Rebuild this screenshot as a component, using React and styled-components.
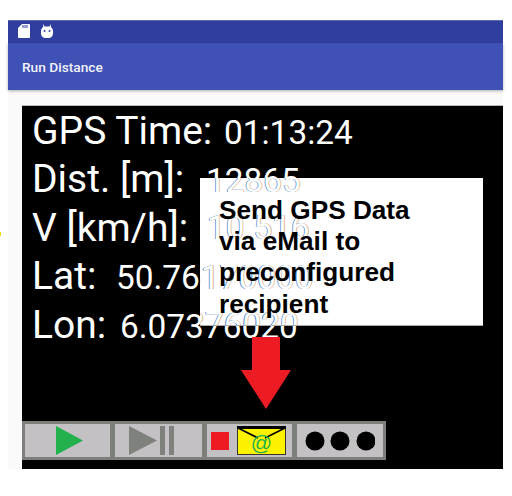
import React from "react";
import styled, { createGlobalStyle } from "styled-components";

const Global = createGlobalStyle`
  html, body { margin: 0; padding: 0; background: #fff; }
  body { font-family: Roboto, "Liberation Sans", sans-serif; }
`;

const Page = styled.div`
  position: relative;
  width: 512px;
  height: 496px;
  padding: 20px 9px 0 8px;
  box-sizing: border-box;
  overflow: hidden;
`;

const Speck = styled.i`
  position: absolute;
  left: 0;
  top: 232px;
  width: 1px;
  height: 4px;
  background: #f5d800;
`;

const Phone = styled.div`
  height: 449px;
  background: #fafafa;
  display: flex;
  flex-direction: column;
`;

const StatusBar = styled.div`
  height: 23px;
  flex: none;
  background: #303f9f;
  border-top: 1px solid #5c68b0;
  display: flex;
  align-items: center;
  gap: 11px;
  padding: 0 0 2px 10px;
  box-sizing: border-box;
`;

const AppBar = styled.div`
  height: 47px;
  flex: none;
  background: #3f51b5;
  color: #f2f3fa;
  font-size: 13.7px;
  font-weight: 500;
  display: flex;
  align-items: center;
  padding-left: 14px;
  box-shadow: 0 1px 3px rgba(0, 0, 0, 0.3);
`;

const Body = styled.div`
  flex: 1;
  padding: 15px 0 0 14px;
  display: flex;
  min-height: 0;
`;

const Screen = styled.div`
  position: relative;
  flex: 1;
  background: #000;
  border-top: 1px solid #bbb;
  padding: 2px 0 9px 10px;
  display: flex;
  flex-direction: column;
  color: #fff;
`;

const Rows = styled.div`
  flex: 1;
  display: flex;
  flex-direction: column;
`;

const Row = styled.div`
  height: 48.4px;
  display: flex;
  align-items: baseline;
  white-space: nowrap;
`;

const Label = styled.span`
  font-size: 39px;
  width: ${(p) => p.$width}px;
  flex: none;
`;

const Value = styled.span`
  font-size: 33.4px;
`;

const Toolbar = styled.div`
  margin-left: -10px;
  width: 358px;
  height: 33px;
  padding: 3px;
  background: #7d7f7a;
  display: flex;
  gap: 5px;
`;

const ToolButton = styled.div`
  width: ${(p) => p.$width}px;
  flex: none;
  box-sizing: border-box;
  padding-left: ${(p) => p.$inset || 0}px;
  background: #c3c1c3;
  display: flex;
  align-items: center;
  justify-content: ${(p) => (p.$inset ? "flex-start" : "center")};
  gap: ${(p) => p.$gap || 0}px;
`;

const Callout = styled.div`
  position: absolute;
  left: 178px;
  top: 72px;
  width: 283px;
  height: 148px;
  background: #fff;
  border-bottom: 1px solid #aaa;
  box-sizing: border-box;
  padding: 16.5px 0 0 19px;
  overflow: hidden;
  color: #000;
  font-family: "Liberation Sans", Arial, sans-serif;
  font-weight: 700;
  font-size: 26.2px;
  line-height: 31.4px;
`;

const Ghost = styled.span`
  position: absolute;
  left: ${(p) => p.$left}px;
  top: ${(p) => p.$top}px;
  font-family: Roboto, sans-serif;
  font-weight: 400;
  font-size: 33.4px;
  line-height: 38px;
  color: #fff;
  text-shadow: -0.8px 0 #4a86d0, 0.8px 0 #d8b48c;
  white-space: nowrap;
`;

const CalloutText = styled.div`
  position: relative;
`;

const Arrow = styled.svg`
  position: absolute;
  left: 219px;
  top: 231px;
`;

export default function App() {
  return (
    <Page>
      <Global />
      <Speck />
      <Phone>
        <StatusBar>
          <svg width="12" height="14" viewBox="0 0 12 14">
            <path d="M4 0h7a1 1 0 0 1 1 1v12a1 1 0 0 1-1 1H1a1 1 0 0 1-1-1V4z" fill="#fff" />
            <path d="M5 1v3M7 1v3M9 1v3" stroke="#303f9f" strokeWidth="1" />
          </svg>
          <svg width="12" height="14" viewBox="0 0 12 14">
            <path d="M2 0l2 3h4l2-3v4H2z" fill="#dfe1f2" />
            <rect x="0" y="2.5" width="12" height="11.5" rx="4.5" fill="#fff" />
            <circle cx="3.5" cy="7" r="1" fill="#303f9f" />
            <circle cx="8.5" cy="7" r="1" fill="#303f9f" />
          </svg>
        </StatusBar>
        <AppBar>Run Distance</AppBar>
        <Body>
          <Screen>
            <Rows>
              <Row><Label $width={192}>GPS Time:</Label><Value>01:13:24</Value></Row>
              <Row><Label $width={174}>Dist. [m]:</Label><Value>12865</Value></Row>
              <Row><Label $width={174}>V [km/h]:</Label><Value>10.516</Value></Row>
              <Row><Label $width={84}>Lat:</Label><Value>50.76170000</Value></Row>
              <Row><Label $width={88}>Lon:</Label><Value>6.07376020</Value></Row>
            </Rows>
            <Toolbar>
              <ToolButton $width={85} $inset={31}>
                <svg width="27" height="29" viewBox="0 0 27 29"><path d="M0 0l27 14.5L0 29z" fill="#22b14c" /></svg>
              </ToolButton>
              <ToolButton $width={87} $inset={14} $gap={3}>
                <svg width="28" height="29" viewBox="0 0 28 29"><path d="M0 0l28 14.5L0 29z" fill="#7f817c" /></svg>
                <svg width="14" height="29" viewBox="0 0 14 29" fill="#7f817c">
                  <rect x="0" width="5" height="29" />
                  <rect x="9" width="5" height="29" />
                </svg>
              </ToolButton>
              <ToolButton $width={85} $inset={4} $gap={8}>
                <svg width="18" height="18"><rect width="18" height="18" fill="#ed1c24" /></svg>
                <svg width="49" height="29" viewBox="0 0 49 29">
                  <rect x="0.5" y="0.5" width="48" height="28" fill="#fff200" stroke="#333" />
                  <rect width="49" height="3" fill="#000" />
                  <path d="M1 2l20 10M48 2L28 12" stroke="#000" strokeWidth="1.6" fill="none" />
                  <text x="24.5" y="24" textAnchor="middle" fontSize="21" fontFamily="Liberation Sans" fill="#22b14c">@</text>
                </svg>
              </ToolButton>
              <ToolButton $width={86}>
                <svg width="70" height="20" viewBox="0 0 70 20" fill="#000">
                  <circle cx="10" cy="10" r="9.5" />
                  <circle cx="35" cy="10" r="9.5" />
                  <circle cx="61" cy="10" r="9.5" />
                </svg>
              </ToolButton>
            </Toolbar>
            <Callout>
              <Ghost $left={7} $top={-16.5}>12865</Ghost>
              <Ghost $left={7} $top={31}>10.516</Ghost>
              <Ghost $left={-83} $top={80.5}>50.76170000</Ghost>
              <Ghost $left={-79} $top={127.5}>6.07376020</Ghost>
              <CalloutText>Send GPS Data<br />via eMail to<br />preconfigured<br />recipient</CalloutText>
            </Callout>
            <Arrow width="50" height="72" viewBox="0 0 50 72">
              <path d="M11 0h28v33h11L25 72 0 33h11z" fill="#ed1c24" />
            </Arrow>
          </Screen>
        </Body>
      </Phone>
    </Page>
  );
}
